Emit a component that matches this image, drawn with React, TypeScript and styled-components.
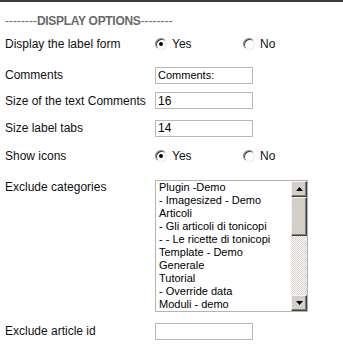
import React from "react";
import styled, { createGlobalStyle } from "styled-components";

const Global = createGlobalStyle`
  html, body { margin: 0; padding: 0; background: #fff; }
  body { font-family: "Liberation Sans", Arial, sans-serif; font-size: 12px; color: #111; }
`;

const Page = styled.div`
  width: 343px;
  border-top: 2px solid #3c3c3c;
  padding: 10px 0 0 5px;
  box-sizing: border-box;
`;

const Heading = styled.div`
  height: 18px;
  display: flex;
  align-items: center;
  color: #6a6a6a;
  font-size: 12px;
  font-weight: bold;
  letter-spacing: -0.3px;
`;

const Dashes = styled.span`
  font-weight: normal;
  letter-spacing: 0;
`;

const Row = styled.div<{ $h: number; $top?: boolean; $mt?: number }>`
  display: grid;
  grid-template-columns: 150px 1fr;
  align-items: ${(p) => (p.$top ? "start" : "center")};
  height: ${(p) => p.$h}px;
  margin-top: ${(p) => p.$mt ?? 0}px;
`;

const Label = styled.div`
  font-size: 12px;
  color: #111;
  white-space: nowrap;
`;

const Radios = styled.div`
  display: grid;
  grid-template-columns: 88px 1fr;
  align-items: center;
`;

const RadioOpt = styled.label`
  display: flex;
  align-items: center;
  gap: 5px;
  font-size: 12px;
`;

const RadioCircle = styled.span<{ $on?: boolean }>`
  position: relative;
  width: 12px;
  height: 12px;
  box-sizing: border-box;
  border-radius: 50%;
  border: 1px solid;
  border-color: #8a8a8a #ececec #ececec #8a8a8a;
  background: #fff;
  box-shadow: inset 1px 1px 0 #404040;
  &::after {
    content: "";
    display: ${(p) => (p.$on ? "block" : "none")};
    position: absolute;
    left: 3px;
    top: 3px;
    width: 4px;
    height: 4px;
    border-radius: 50%;
    background: #000;
  }
`;

const TextBox = styled.div<{ $small?: boolean }>`
  width: 98px;
  height: 17px;
  box-sizing: border-box;
  border: 1px solid #b8b8b8;
  background: #fff;
  padding: 0 2px;
  display: flex;
  align-items: center;
  font-family: "Liberation Sans", Arial, sans-serif;
  font-size: ${(p) => (p.$small ? "11px" : "12px")};
  color: #000;
`;

const ListBox = styled.div`
  width: 153px;
  height: 132px;
  box-sizing: border-box;
  border: 1px solid #b4b4b4;
  display: grid;
  grid-template-columns: 1fr 16px;
  background: #fff;
`;

const Items = styled.div`
  padding: 0 0 0 3px;
  font-family: "Liberation Sans", Tahoma, sans-serif;
  font-size: 11px;
  line-height: 13px;
  color: #000;
  white-space: nowrap;
  overflow: hidden;
`;

const Scroll = styled.div`
  display: grid;
  grid-template-rows: 16px 39px 1fr 16px;
`;

const SBtn = styled.div`
  box-sizing: border-box;
  background: #d4d0c8;
  border: 1px solid;
  border-color: #f4f4f4 #404040 #404040 #f4f4f4;
  box-shadow: inset -1px -1px 0 #808080;
  display: flex;
  align-items: center;
  justify-content: center;
`;

const Track = styled.div`
  background-color: #fff;
  background-image: repeating-conic-gradient(#d4d0c8 0 25%, #fff 0 50%);
  background-size: 2px 2px;
`;

const Arrow = ({ down }: { down?: boolean }) => (
  <svg width="7" height="4" viewBox="0 0 7 4">
    <path d={down ? "M0 0H7L3.5 4Z" : "M0 4H7L3.5 0Z"} fill="#000" />
  </svg>
);

const categories = [
  "Plugin -Demo",
  "- Imagesized - Demo",
  "Articoli",
  "- Gli articoli di tonicopi",
  "- - Le ricette di tonicopi",
  "Template - Demo",
  "Generale",
  "Tutorial",
  "- Override data",
  "Moduli - demo",
];

const Radio = ({ on, text }: { on?: boolean; text: string }) => (
  <RadioOpt>
    <RadioCircle $on={on} />
    {text}
  </RadioOpt>
);

export default function App() {
  return (
    <>
      <Global />
      <Page>
        <Heading>
          <Dashes>--------</Dashes>DISPLAY OPTIONS<Dashes>--------</Dashes>
        </Heading>
        <Row $h={28}>
          <Label>Display the label form</Label>
          <Radios>
            <Radio on text="Yes" />
            <Radio text="No" />
          </Radios>
        </Row>
        <Row $h={34}>
          <Label>Comments</Label>
          <TextBox $small>Comments:</TextBox>
        </Row>
        <Row $h={16}>
          <Label>Size of the text Comments</Label>
          <TextBox>16</TextBox>
        </Row>
        <Row $h={40}>
          <Label>Size label tabs</Label>
          <TextBox>14</TextBox>
        </Row>
        <Row $h={16}>
          <Label>Show icons</Label>
          <Radios>
            <Radio on text="Yes" />
            <Radio text="No" />
          </Radios>
        </Row>
        <Row $h={132} $top $mt={16}>
          <Label>Exclude categories</Label>
          <ListBox>
            <Items>
              {categories.map((c) => (
                <div key={c}>{c}</div>
              ))}
            </Items>
            <Scroll>
              <SBtn>
                <Arrow />
              </SBtn>
              <SBtn />
              <Track />
              <SBtn>
                <Arrow down />
              </SBtn>
            </Scroll>
          </ListBox>
        </Row>
        <Row $h={38}>
          <Label>Exclude article id</Label>
          <TextBox />
        </Row>
      </Page>
    </>
  );
}
